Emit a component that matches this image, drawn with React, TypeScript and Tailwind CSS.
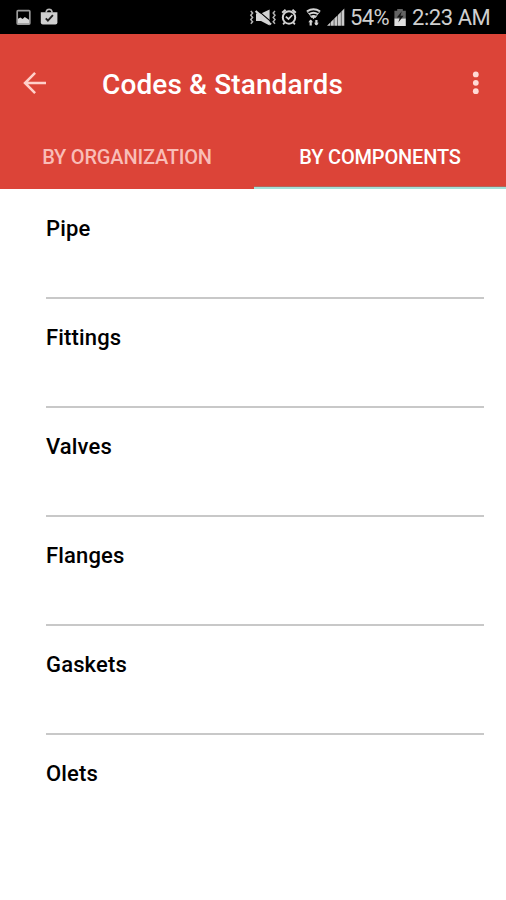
const components = ['Pipe', 'Fittings', 'Valves', 'Flanges', 'Gaskets', 'Olets'];

function NotificationIcons() {
  return (
    <svg className="ml-4 h-[34px] w-[44px] shrink-0" viewBox="16 0 44 34" fill="none">
      <rect x="17.2" y="10.7" width="12.6" height="13.4" rx="0.8" stroke="#9c9c9c" strokeWidth="1.7" />
      <path d="M18 23.4v-4.6l2.4-1.2 2.2 1.5 2.2-2 4.2 2.6v3.7z" fill="#d6d6d6" />
      <path d="M46.3 12.5v-1.2a3 3 0 0 1 5.6 0v1.2" stroke="#b8b8b8" strokeWidth="1.7" />
      <path d="M40.8 12.2h16.6v10.4a2 2 0 0 1-2 2H42.8a2 2 0 0 1-2-2z" fill="#d0d0d0" />
      <path d="M45.8 18.4l2.1 2.2 5-5.4" stroke="#222" strokeWidth="1.9" />
    </svg>
  );
}

function SystemIcons() {
  return (
    <svg className="h-[34px] w-[97px] shrink-0" viewBox="249 0 97 34" fill="none">
      <g stroke="#b5b5b5" strokeWidth="1.5">
        <path d="M250.8 11l1.8 2-1.8 2.2 1.8 2.2-1.8 2.2 1.8 2.2-1.8 2" />
        <path d="M275 11l-1.8 2 1.8 2.2-1.8 2.2 1.8 2.2-1.8 2.2 1.8 2" />
      </g>
      <path d="M256 13.6h5l8.6-4v15.8l-8.6-4.4h-5z" fill="#d4d4d4" />
      <path d="M257.8 10.4l14 12" stroke="#000" strokeWidth="1.2" />
      <path d="M255.6 11l15.4 13.5" stroke="#d4d4d4" strokeWidth="2.3" />

      <circle cx="289" cy="17.5" r="6.2" stroke="#d4d4d4" strokeWidth="2" />
      <path d="M282.2 12.8l3.4-3.1M295.8 12.8l-3.4-3.1" stroke="#d4d4d4" strokeWidth="2" />
      <path d="M285.8 16.7l2.7 2.3 3.8-4M284.8 22.4l-1.7 2M293.2 22.4l1.7 2" stroke="#d4d4d4" strokeWidth="1.7" />

      <path d="M307 11.4q6.5-4.1 13 0M309 14.2q4.5-2.9 9 0M310.8 17q2.7-1.9 5.4 0" stroke="#d4d4d4" strokeWidth="2" />
      <path d="M307 11.4l5.2 6.6M320 11.4l-5.2 6.6" stroke="#b0b0b0" strokeWidth="1" />
      <path d="M311.2 16.2h4.6l-2.3 3.1z" fill="#d4d4d4" />
      <path d="M310.7 25.4v-5M316.4 20v5" stroke="#d4d4d4" strokeWidth="2.2" />
      <path d="M308.3 22.2l2.4-2.8 2.4 2.8zM314 22.8h4.8l-2.4 2.8z" fill="#d4d4d4" />

      <path d="M327 25.8l3.3-3.3v3.3zM330.8 22l3-3v6.8h-3zM334.3 18.5l3.1-3.1v10.4h-3.1zM337.9 14.9l3-3v13.9h-3zM341.4 11.4l2.9-2.9v17.3h-2.9z" fill="#cacaca" />
    </svg>
  );
}

function BatteryIcon() {
  return (
    <svg className="ml-[3px] h-[34px] w-[14px] shrink-0" viewBox="393 0 14 34" fill="none">
      <path d="M397.2 9h5.6v1.7h3v8.1H394.4v-8.1h2.8z" fill="#636363" />
      <path d="M394.4 18.5h11.4V26h-11.4z" fill="#e0e0e0" />
      <path d="M401.8 11.2l-5 6.2h3l-1.5 5 5.3-6.6h-3.1z" fill="#171717" />
    </svg>
  );
}

function BackIcon() {
  return (
    <svg className="ml-[22px] h-[26px] w-[26px] shrink-0" viewBox="0 0 26 26" fill="none" stroke="#ffd0ca" strokeWidth="2.5">
      <path d="M24 13H3M13.1 2.9L3 13l10.1 10.1" />
    </svg>
  );
}

function MoreIcon() {
  return (
    <svg className="mr-[20px] ml-auto h-[26px] w-[20px]" viewBox="0 0 20 26" fill="#ffdad5">
      <circle cx="9.8" cy="4.4" r="2.9" />
      <circle cx="9.8" cy="12.8" r="2.9" />
      <circle cx="9.8" cy="21.2" r="2.9" />
    </svg>
  );
}

export default function App() {
  return (
    <div className="flex h-[900px] w-[506px] flex-col overflow-hidden bg-white font-[Roboto,'Liberation_Sans',sans-serif]">
      <div className="flex h-[34px] shrink-0 items-center bg-black text-[22px] leading-[34px] whitespace-nowrap text-[#cfcfcf]">
        <NotificationIcons />
        <div className="ml-auto flex items-center pr-[15px]">
          <SystemIcons />
          <span className="ml-[4px] w-[40px] pt-[2px] tracking-[-0.6px]">54%</span>
          <BatteryIcon />
          <span className="ml-[5px] w-[79px] pt-[2px] tracking-[-0.45px]">2:23 AM</span>
        </div>
      </div>

      <header className="flex h-[155px] shrink-0 flex-col bg-[#dc4438]">
        <div className="flex h-[98px] items-center">
          <BackIcon />
          <h1 className="ml-[54px] pt-[3px] text-[28px] leading-[34px] font-medium tracking-[0.12px] whitespace-nowrap text-white">Codes &amp; Standards</h1>
          <MoreIcon />
        </div>
        <nav className="flex h-[57px] text-[20px] leading-[24px] font-medium tracking-[-0.18px] whitespace-nowrap">
          <button className="flex w-[254px] justify-center pt-[13px] text-[#f9bdb7]">BY ORGANIZATION</button>
          <button className="flex w-[252px] justify-center border-b-2 border-[#a3e0d8] pt-[13px] text-white shadow-[inset_0_-1px_0_#b5655a]">BY COMPONENTS</button>
        </nav>
      </header>

      <ul className="mr-[22px] ml-[46px] pt-px">
        {components.map((name) => (
          <li key={name} className="h-[109px] border-b-2 border-[#c8c8c8] pt-[24px] text-[22px] leading-[30px] font-medium tracking-[0.15px] text-black last:border-0">
            {name}
          </li>
        ))}
      </ul>
    </div>
  );
}
